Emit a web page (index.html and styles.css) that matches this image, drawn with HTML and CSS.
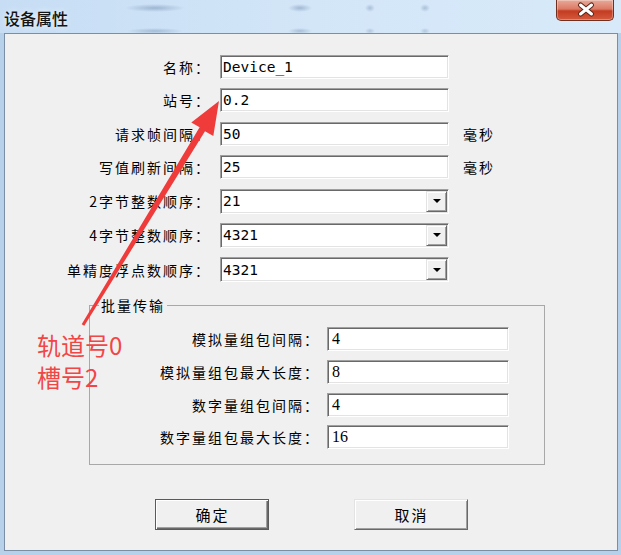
FILE: index.html
```html
<!DOCTYPE html>
<html lang="zh-CN">
<head>
    <meta charset="UTF-8">
    <title>设备属性</title>
    <link rel="stylesheet" href="styles.css">
</head>
<body>
    <div class="window">
        <div class="titlebar">
            <span class="title">设备属性</span>
            <div class="close-btn">
                <svg width="58" height="20" viewBox="0 0 58 20">
                    <path d="M23.5 5 L34.5 14 M34.5 5 L23.5 14" stroke="#5a2418" stroke-width="5" stroke-linecap="round"/>
                    <path d="M23.5 5 L34.5 14 M34.5 5 L23.5 14" stroke="#ffffff" stroke-width="3" stroke-linecap="round"/>
                </svg>
            </div>
        </div>

        <div class="client">
            <div class="form">
                <label>名称：</label>
                <div class="edit mono">Device_1</div>
                <span></span>

                <label>站号：</label>
                <div class="edit mono">0.2</div>
                <span></span>

                <label>请求帧间隔：</label>
                <div class="edit mono">50</div>
                <span class="unit">毫秒</span>

                <label>写值刷新间隔：</label>
                <div class="edit mono">25</div>
                <span class="unit">毫秒</span>

                <label>2字节整数顺序：</label>
                <div class="combo"><span class="combo-value mono">21</span><span class="combo-btn"></span></div>
                <span></span>

                <label>4字节整数顺序：</label>
                <div class="combo"><span class="combo-value mono">4321</span><span class="combo-btn"></span></div>
                <span></span>

                <label>单精度浮点数顺序：</label>
                <div class="combo"><span class="combo-value mono">4321</span><span class="combo-btn"></span></div>
                <span></span>
            </div>

            <fieldset class="group">
                <legend>批量传输</legend>
                <div class="group-form">
                    <label>模拟量组包间隔：</label>
                    <div class="edit serif">4</div>

                    <label>模拟量组包最大长度：</label>
                    <div class="edit serif">8</div>

                    <label>数字量组包间隔：</label>
                    <div class="edit serif">4</div>

                    <label>数字量组包最大长度：</label>
                    <div class="edit serif">16</div>
                </div>
            </fieldset>

            <div class="actions">
                <button class="btn btn-default">确定</button>
                <button class="btn">取消</button>
            </div>
        </div>

        <!-- red annotation drawn over the dialog -->
        <svg class="note-arrow" width="621" height="555" viewBox="0 0 621 555">
            <polygon points="81.7,324.2 199.6,127.3 191.3,122.6 219,101 213.3,136 205.0,131.3 84.3,325.8" fill="#f03b3b"/>
        </svg>
        <div class="note-text">轨道号0<br>槽号2</div>
    </div>
</body>
</html>
```

FILE: styles.css
```css
body {
    margin: 0;
    font-family: "Noto Sans CJK SC", "Noto Sans", sans-serif;
    background: #ffffff;
}

.window {
    position: relative;
    width: 621px;
    height: 555px;
    display: flex;
    flex-direction: column;
    background: #b8d1eb;
    overflow: hidden;
}

.titlebar {
    height: 33px;
    display: flex;
    align-items: flex-start;
    background:
        radial-gradient(ellipse 30px 4px at 155px 8px, rgba(70, 100, 140, 0.35), transparent),
        radial-gradient(ellipse 12px 4px at 300px 8px, rgba(70, 100, 140, 0.35), transparent),
        radial-gradient(ellipse 5px 4px at 370px 8px, rgba(70, 100, 140, 0.3), transparent),
        radial-gradient(ellipse 5px 4px at 425px 8px, rgba(70, 100, 140, 0.3), transparent),
        radial-gradient(ellipse 28px 3px at 155px 31px, rgba(70, 100, 140, 0.3), transparent),
        radial-gradient(ellipse 12px 3px at 300px 31px, rgba(70, 100, 140, 0.3), transparent),
        radial-gradient(ellipse 5px 3px at 370px 31px, rgba(70, 100, 140, 0.25), transparent),
        radial-gradient(ellipse 5px 3px at 425px 31px, rgba(70, 100, 140, 0.25), transparent),
        linear-gradient(to right, #c6ddf4, #d3e6f8 50%, #d8eaf9);
}

.title {
    margin: 8px 0 0 4px;
    font-size: 16px;
    line-height: 20px;
    font-weight: 500;
    color: #141414;
    text-shadow: 0 0 6px rgba(255, 255, 255, 0.9);
}

.close-btn {
    margin-left: auto;
    margin-right: 7px;
    width: 58px;
    height: 21px;
    box-sizing: border-box;
    border: 1px solid #70301f;
    border-top: none;
    border-radius: 0 0 5px 5px;
    background: linear-gradient(to bottom, #e8aa9a 0%, #dc7a63 45%, #c43b21 55%, #d45a3e 100%);
    box-shadow: inset 0 0 0 1px rgba(255, 255, 255, 0.3);
}

.close-btn svg {
    display: block;
}

.client {
    flex: 1;
    margin: 0 3px 4px 4px;
    border: 1px solid #7a8ea6;
    background: #f0f0f0;
    display: flex;
    flex-direction: column;
}

.form {
    display: grid;
    grid-template-columns: 206px 229px auto;
    grid-template-rows: repeat(4, 24px) repeat(3, 25px);
    column-gap: 9px;
    row-gap: 9.4px;
    padding-top: 21px;
    align-items: center;
}

label {
    text-align: right;
    font-size: 14px;
    line-height: 20px;
    letter-spacing: 2px;
    color: #000;
    white-space: nowrap;
}

.unit {
    margin-left: 5px;
    font-size: 14px;
    letter-spacing: 2px;
    color: #000;
}

.edit,
.combo {
    box-sizing: border-box;
    height: 24px;
    background: #fff;
    border: 1px solid;
    border-color: #a0a0a0 #ffffff #ffffff #a0a0a0;
    box-shadow: inset 1px 1px 0 #696969, inset -1px -1px 0 #e3e3e3;
    color: #000;
    line-height: 22px;
    padding-left: 2px;
    white-space: nowrap;
}

.combo {
    height: 25px;
    display: flex;
    align-items: center;
    padding-right: 1px;
}

.combo-value {
    flex: 1;
}

.combo-btn {
    width: 21px;
    height: 21px;
    box-sizing: border-box;
    display: flex;
    align-items: center;
    justify-content: center;
    background: #f0f0f0;
    border: 1px solid;
    border-color: #e3e3e3 #696969 #696969 #e3e3e3;
    box-shadow: inset 1px 1px 0 #fff, inset -1px -1px 0 #a0a0a0;
}

.combo-btn::after {
    content: "";
    border-left: 4px solid transparent;
    border-right: 4px solid transparent;
    border-top: 4px solid #000;
}

.mono {
    font-family: "DejaVu Sans Mono", monospace;
    font-size: 14.5px;
}

.serif {
    font-family: "Liberation Serif", serif;
    font-size: 16px;
    padding-left: 4px;
}

.group {
    margin: 13px 0 0 84px;
    width: 456px;
    box-sizing: border-box;
    border: 1px solid #a8a8a8;
    padding: 12px 0 15px 0;
    min-width: 0;
}

.group legend {
    margin-left: 9px;
    padding: 0 2px;
    font-size: 14px;
    line-height: 20px;
    letter-spacing: 2px;
    color: #000;
}

.group-form {
    display: grid;
    grid-template-columns: 230px 182px;
    grid-auto-rows: 24px;
    column-gap: 7px;
    row-gap: 8.7px;
    align-items: center;
}

.actions {
    display: flex;
    justify-content: center;
    gap: 85px;
    margin-top: 34px;
}

.btn {
    width: 114px;
    height: 31px;
    box-sizing: border-box;
    padding: 0 0 0 2px;
    font-family: "Noto Sans CJK SC", sans-serif;
    font-size: 15px;
    letter-spacing: 2px;
    color: #000;
    background: #f0f0f0;
    border: 1px solid;
    border-color: #e3e3e3 #696969 #696969 #e3e3e3;
    box-shadow: inset 1px 1px 0 #fff, inset -1px -1px 0 #a0a0a0;
}

.btn-default {
    border-color: #5a5a5a;
    box-shadow: inset 1px 1px 0 #fff, inset -1px -1px 0 #696969, inset -2px -2px 0 #a0a0a0;
}

.note-arrow {
    position: absolute;
    top: 0;
    left: 0;
    pointer-events: none;
}

.note-text {
    position: absolute;
    left: 37px;
    top: 329px;
    font-size: 24px;
    line-height: 32px;
    color: #f14646;
}
```
